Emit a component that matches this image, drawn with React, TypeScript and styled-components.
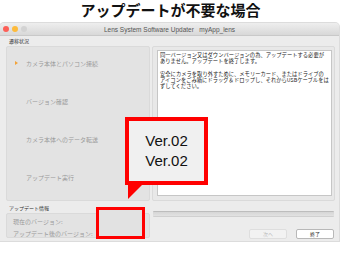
import React from "react";
import styled, { createGlobalStyle } from "styled-components";

const GlobalStyle = createGlobalStyle`
  html, body {
    margin: 0;
    padding: 0;
    background: #ffffff;
  }
  body {
    font-family: "Liberation Sans", "Noto Sans CJK JP", sans-serif;
  }
`;

const Page = styled.div`
  position: relative;
  width: 341px;
  height: 261px;
  overflow: hidden;
`;

const Heading = styled.h1`
  margin: 0;
  height: 23px;
  font-family: "Noto Sans CJK JP", sans-serif;
  font-weight: 700;
  font-size: 15px;
  line-height: 19px;
  text-align: center;
  color: #111111;
`;

const Window = styled.div`
  width: 339px;
  height: 218px;
  background: #ececec;
  border-radius: 4px 4px 0 0;
  box-shadow: 0 0 0 1px #dcdcdc;
  display: flex;
  flex-direction: column;
`;

const TitleBar = styled.div`
  height: 12px;
  display: grid;
  grid-template-columns: 1fr auto 1fr;
  align-items: center;
  background: linear-gradient(#eeeeee, #d8d8d8);
  border-bottom: 1px solid #c9c9c9;
  border-radius: 4px 4px 0 0;
`;

const Lights = styled.div`
  display: flex;
  gap: 3px;
  padding-left: 3px;
`;

const Light = styled.span<{ $color: string }>`
  width: 6px;
  height: 6px;
  border-radius: 50%;
  background: ${(p) => p.$color};
`;

const WindowTitle = styled.div`
  font-size: 6.5px;
  color: #555555;
  white-space: pre;
`;

const Body = styled.div`
  flex: 1;
  padding: 0 4px 0 6px;
  display: grid;
  grid-template-columns: 144px 183px;
  grid-template-rows: 10px 155px auto;
  column-gap: 2px;
  grid-template-areas:
    "label ."
    "steps text"
    "info footer";
`;

const SectionLabel = styled.div<{ $area?: string }>`
  grid-area: ${(p) => p.$area || "auto"};
  padding-left: 3px;
  font-family: "Noto Sans CJK JP", sans-serif;
  font-size: 5px;
  line-height: 10px;
  color: #333333;
`;

const StepsPanel = styled.div`
  grid-area: steps;
  background: #e3e3e3;
  border: 1px solid #dadada;
  border-radius: 2px;
  padding-top: 11px;
  display: flex;
  flex-direction: column;
  gap: 28px;
`;

const Step = styled.div`
  display: flex;
  align-items: center;
  height: 10px;
  padding-left: 8px;
  font-family: "Noto Sans CJK JP", sans-serif;
  font-size: 6px;
  color: #9a9a9a;
`;

const Marker = styled.span<{ $active?: boolean }>`
  width: 11px;
  flex: none;
  &::before {
    content: "";
    display: ${(p) => (p.$active ? "block" : "none")};
    width: 0;
    height: 0;
    border-top: 2.5px solid transparent;
    border-bottom: 2.5px solid transparent;
    border-left: 3.5px solid #f2a33a;
  }
`;

const TextPanel = styled.div`
  grid-area: text;
  background: #e8e8e8;
  border: 1px solid #dadada;
  border-radius: 2px;
  padding: 3px 2px 4px 4px;
  display: flex;
`;

const MessageBox = styled.div`
  flex: 1;
  background: #ffffff;
  border: 1px solid #c6c6c6;
  padding: 1px 2px;
  font-family: "Noto Sans CJK JP", sans-serif;
  font-size: 5.3px;
  line-height: 6.3px;
  color: #222222;
`;

const Para = styled.p`
  margin: 0 0 6.3px 0;
`;

const InfoColumn = styled.div`
  grid-area: info;
  display: flex;
  flex-direction: column;
  padding-top: 2px;
`;

const InfoPanel = styled.div`
  height: 25px;
  box-sizing: border-box;
  background: #e3e3e3;
  border: 1px solid #dadada;
  border-radius: 2px;
  padding: 2px 0 0 6px;
  font-family: "Noto Sans CJK JP", sans-serif;
  font-size: 6px;
  line-height: 12px;
  color: #9a9a9a;
`;

const Footer = styled.div`
  grid-area: footer;
  padding: 10px 1px 0 1px;
  display: flex;
  flex-direction: column;
  gap: 12px;
`;

const Progress = styled.div`
  height: 6px;
  box-sizing: border-box;
  border-top: 1px solid #bdbdbd;
  border-bottom: 1px solid #d0d0d0;
  background: linear-gradient(#d6d6d6, #e2e2e2);
  border-radius: 1px;
`;

const Buttons = styled.div`
  display: flex;
  justify-content: flex-end;
  gap: 9px;
`;

const Button = styled.button<{ $disabled?: boolean }>`
  width: 38px;
  height: 10px;
  padding: 0;
  border-radius: 2px;
  border: 1px solid ${(p) => (p.$disabled ? "#dedede" : "#b8b8b8")};
  background: ${(p) => (p.$disabled ? "#f2f2f2" : "#ffffff")};
  color: ${(p) => (p.$disabled ? "#bcbcbc" : "#333333")};
  font-family: "Noto Sans CJK JP", sans-serif;
  font-size: 5px;
  line-height: 8px;
`;

const Highlight = styled.div`
  position: absolute;
  left: 96px;
  top: 207px;
  width: 49px;
  height: 32px;
  box-sizing: border-box;
  border: 3px solid #ff0000;
  background: #e2e2e2;
`;

const Callout = styled.div`
  position: absolute;
  left: 125px;
  top: 117px;
  width: 83px;
  height: 68px;
  box-sizing: border-box;
  border: 4px solid #ff0000;
  background: #f0f0f0;
  display: flex;
  flex-direction: column;
  align-items: center;
  justify-content: center;
  font-family: "Liberation Sans", sans-serif;
  font-size: 15px;
  line-height: 20px;
  color: #111111;

  &::after {
    content: "";
    position: absolute;
    left: -1px;
    top: 100%;
    width: 18px;
    height: 18px;
    background: #ff0000;
    clip-path: polygon(0 0, 100% 0, 0 100%);
  }
`;

const steps = [
  "カメラ本体とパソコン接続",
  "バージョン確認",
  "カメラ本体へのデータ転送",
  "アップデート実行",
];

export default function App() {
  return (
    <Page>
      <GlobalStyle />
      <Heading>アップデートが不要な場合</Heading>
      <Window>
        <TitleBar>
          <Lights>
            <Light $color="#fc5f57" />
            <Light $color="#fdbb3c" />
            <Light $color="#d3d3d3" />
          </Lights>
          <WindowTitle>{"Lens System Software Updater   myApp_lens"}</WindowTitle>
          <span />
        </TitleBar>
        <Body>
          <SectionLabel $area="label">遷移状況</SectionLabel>
          <StepsPanel>
            {steps.map((s, i) => (
              <Step key={s}>
                <Marker $active={i === 0} />
                {s}
              </Step>
            ))}
          </StepsPanel>
          <TextPanel>
            <MessageBox>
              <Para>
                同一バージョン又はダウンバージョンの為、アップデートする必要がありません。アップデートを終了します。
              </Para>
              <Para>
                安全にカメラを取り外すために、メモリーカード、またはドライブのアイコンをごみ箱にドラッグ＆ドロップし、それからUSBケーブルをはずしてください。
              </Para>
            </MessageBox>
          </TextPanel>
          <InfoColumn>
            <SectionLabel>アップデート情報</SectionLabel>
            <InfoPanel>
              <div>現在のバージョン:</div>
              <div>アップデート後のバージョン:</div>
            </InfoPanel>
          </InfoColumn>
          <Footer>
            <Progress />
            <Buttons>
              <Button $disabled>次へ</Button>
              <Button>終了</Button>
            </Buttons>
          </Footer>
        </Body>
      </Window>
      <Highlight />
      <Callout>
        <div>Ver.02</div>
        <div>Ver.02</div>
      </Callout>
    </Page>
  );
}
